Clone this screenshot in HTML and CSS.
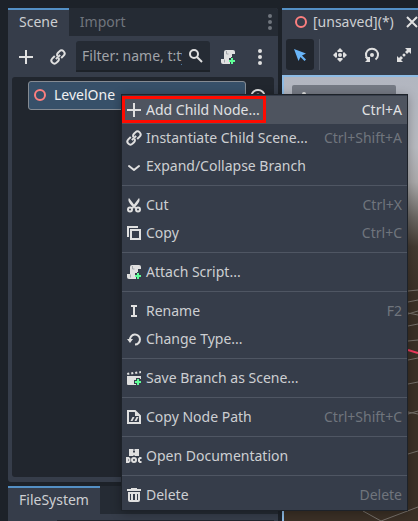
FILE: index.html
```
<!DOCTYPE html>
<html lang="en">
<head>
    <meta charset="UTF-8">
    <meta name="viewport" content="width=device-width, initial-scale=1.0">
    <title>Scene Editor</title>
    <link rel="stylesheet" href="styles.css">
</head>
<body>
    <!-- Shared icons -->
    <svg class="icon-defs" aria-hidden="true">
        <symbol id="add" viewBox="0 0 16 16"><path fill="currentColor" d="M7 1v6H1v2h6v6h2V9h6V7H9V1z"/></symbol>
        <symbol id="link" viewBox="0 0 16 16">
            <g fill="none" stroke="currentColor" stroke-width="2" transform="rotate(-45 8 8)">
                <path d="M6.500 5H3a3 3 0 0 0 0 6h2a3 3 0 0 0 2.800-2"/>
                <path d="M9.500 11H13a3 3 0 0 0 0-6h-2a3 3 0 0 0-2.800 2"/>
                <path d="M5 8h6"/>
            </g>
        </symbol>
        <symbol id="chevron" viewBox="0 0 16 16"><path fill="none" stroke="currentColor" stroke-width="2" stroke-linecap="round" stroke-linejoin="round" d="M3 8l5 4 5-4"/></symbol>
        <symbol id="cut" viewBox="0 0 16 16">
            <path fill="currentColor" d="M3 1C1.500 3 3 6 6.500 9.500L5.500 11l1.500 1 1-1.500L9 12l1.500-1-1-1.500C13 6 14.500 3 13 1L8 7.500z"/>
            <g fill="none" stroke="currentColor" stroke-width="2"><circle cx="4" cy="12.500" r="2"/><circle cx="12" cy="12.500" r="2"/></g>
        </symbol>
        <symbol id="copy" viewBox="0 0 16 16"><path fill="none" stroke="currentColor" stroke-width="2" d="M2 12V2h10M5 5h9v9H5z"/></symbol>
        <symbol id="script" viewBox="0 0 16 16">
            <path fill="currentColor" d="M6 1a2 2 0 0 0-2 2v7H1v3a2 2 0 0 0 2 2h7v-2H9v-4h2V8h1V5h3V3a2 2 0 0 0-2-2z"/>
            <path fill="none" stroke="#a4a7ac" d="M6.500 2v3h2M4.500 10.500v3"/>
            <path fill="#5fff97" d="M11 9h2v2h2v2h-2v2h-2v-2H9v-2h2z"/>
        </symbol>
        <symbol id="rename" viewBox="0 0 16 16"><path fill="currentColor" d="M5 2h6v2H9v8h2v2H5v-2h2V4H5z"/></symbol>
        <symbol id="reload" viewBox="0 0 16 16">
            <path fill="none" stroke="currentColor" stroke-width="2" d="M4 9a5 5 0 1 1 5 4.500"/>
            <path fill="currentColor" d="M1 8h6l-3 4z"/>
        </symbol>
        <symbol id="save-scene" viewBox="0 0 16 16">
            <path fill="currentColor" d="M1 6h14v3h-1V8h-4v2H8v4h2v1H2a1 1 0 0 1-1-1zM1 3l2-.5.500 2-2 .5zM5 2.500l2-.5.500 2-2 .5zM9 2l2-.5.500 2-2 .5zM13 1.500l2-.5v2l-1.500.5z"/>
            <path fill="#5fff97" d="M11 9h2v2h2v2h-2v2h-2v-2H9v-2h2z"/>
        </symbol>
        <symbol id="node-path" viewBox="0 0 16 16">
            <path fill="none" stroke="currentColor" stroke-width="2" d="M2 2h7l5 5v7H2z"/>
            <path fill="currentColor" d="M9 2v5h5zM6.500 8h2l-2 4h-2zM10.500 8h2l-2 4h-2z"/>
        </symbol>
        <symbol id="docs" viewBox="0 0 16 16">
            <path fill="currentColor" d="M3 1h4v4l1-1 1 1V1h4v7H9L8 7 7 8H3zM7.500 1h1v2h-1z"/>
            <g fill="none" stroke="currentColor" stroke-width="2"><path d="M1 10v4h1.500l1-1v-2l-1-1z"/><circle cx="8" cy="12" r="2"/><path d="M15.500 10H14l-1 1v2l1 1h1.500"/></g>
        </symbol>
        <symbol id="trash" viewBox="0 0 16 16"><path fill="currentColor" fill-rule="evenodd" d="M5 1h6v1h4v2H1V2h4zM2 5h12v8a2 2 0 0 1-2 2H4a2 2 0 0 1-2-2zm2 2v6h1V7zm3 0v6h2V7zm4 0v6h1V7z"/></symbol>
        <symbol id="search" viewBox="0 0 16 16"><g fill="none" stroke="currentColor" stroke-width="2"><circle cx="6" cy="6" r="4"/><path d="M9 9l5 5"/></g></symbol>
        <symbol id="dots" viewBox="0 0 16 16"><g fill="currentColor"><circle cx="8" cy="2" r="2"/><circle cx="8" cy="8" r="2"/><circle cx="8" cy="14" r="2"/></g></symbol>
        <symbol id="node3d" viewBox="0 0 16 16"><circle cx="8" cy="8" r="5" fill="none" stroke="#fc7f7f" stroke-width="2"/></symbol>
        <symbol id="eye" viewBox="0 0 16 16"><path fill="none" stroke="currentColor" stroke-width="2" d="M1.500 8a6.500 6 0 0 1 13 0a6.500 6 0 0 1-13 0z"/><circle cx="8" cy="8" r="2.500" fill="currentColor"/></symbol>
        <symbol id="close" viewBox="0 0 16 16"><path fill="none" stroke="currentColor" stroke-width="2" d="M3 3l10 10M13 3L3 13"/></symbol>
        <symbol id="select" viewBox="0 0 16 16"><path fill="#69b5f8" d="M2 2l4.500 12 2-4 4 4 1.500-1.500-4-4 4-2z"/></symbol>
        <symbol id="move" viewBox="0 0 16 16"><g fill="currentColor"><circle cx="8" cy="8" r="2"/><path d="M8 1l3 3-1 1H6L5 4zM8 15l3-3-1-1H6l-1 1zM1 8l3-3 1 1v4l-1 1zM15 8l-3-3-1 1v4l1 1z"/></g></symbol>
        <symbol id="rotate" viewBox="0 0 16 16">
            <path fill="none" stroke="currentColor" stroke-width="2" d="M4.500 12.500a6 6 0 1 1 7 0"/>
            <path fill="currentColor" d="M1 10h5v5H1l2-2z"/><circle cx="8" cy="8" r="2" fill="currentColor"/>
        </symbol>
        <symbol id="scale" viewBox="0 0 16 16">
            <path fill="currentColor" d="M9 1h6v6l-2-2-2 2-2-2 2-2zM7 15H1V9l2 2 2-2 2 2-2 2z"/><circle cx="8" cy="8" r="1.500" fill="currentColor"/>
        </symbol>
    </svg>

    <div class="editor">
        <div class="docks">
            <section class="dock scene-dock">
                <div class="tab-bar">
                    <button type="button" class="tab active">Scene</button>
                    <button type="button" class="tab">Import</button>
                    <button type="button" class="icon-btn tab-menu" aria-label="Dock options"><svg class="icon"><use href="#dots"/></svg></button>
                </div>
                <div class="scene-tools">
                    <button type="button" class="icon-btn" aria-label="Add node"><svg class="icon"><use href="#add"/></svg></button>
                    <button type="button" class="icon-btn" aria-label="Instantiate scene"><svg class="icon"><use href="#link"/></svg></button>
                    <label class="filter">
                        <input type="text" class="filter-input" placeholder="Filter: name, t:type" aria-label="Filter nodes">
                        <svg class="icon"><use href="#search"/></svg>
                    </label>
                    <button type="button" class="icon-btn" aria-label="Attach script"><svg class="icon"><use href="#script"/></svg></button>
                    <button type="button" class="icon-btn" aria-label="More options"><svg class="icon"><use href="#dots"/></svg></button>
                </div>
                <div class="tree">
                    <div class="tree-row">
                        <button type="button" class="tree-item"><svg class="icon"><use href="#node3d"/></svg>LevelOne</button>
                        <button type="button" class="icon-btn" aria-label="Toggle visibility"><svg class="icon"><use href="#eye"/></svg></button>
                    </div>
                </div>
            </section>
            <section class="dock files-dock">
                <div class="tab-bar">
                    <button type="button" class="tab active">FileSystem</button>
                </div>
                <div class="files-body"></div>
            </section>
        </div>

        <main class="workspace">
            <div class="scene-tab">
                <svg class="icon"><use href="#node3d"/></svg>
                <span class="scene-title">[unsaved](*)</span>
                <button type="button" class="icon-btn" aria-label="Close scene"><svg class="icon"><use href="#close"/></svg></button>
            </div>
            <div class="view-tools">
                <button type="button" class="tool-btn active" aria-label="Select"><svg class="icon"><use href="#select"/></svg></button>
                <span class="tool-divider"></span>
                <button type="button" class="tool-btn" aria-label="Move"><svg class="icon"><use href="#move"/></svg></button>
                <button type="button" class="tool-btn" aria-label="Rotate"><svg class="icon"><use href="#rotate"/></svg></button>
                <button type="button" class="tool-btn" aria-label="Scale"><svg class="icon"><use href="#scale"/></svg></button>
            </div>
            <div class="viewport">
                <svg class="grid-lines" viewBox="0 0 134 444" preserveAspectRatio="xMinYMin slice" aria-hidden="true">
                    <g fill="none" stroke="#77716b">
                        <path d="M124 214l10-1M124 225l10-2M124 236l10 2M124 237l10-3M124 249l10-2M124 264l10-1M124 283l10-2M124 307l10-2M124 335l10 2M124 337l10-3M124 377l10-3M79 434l18 10 37-14"/>
                    </g>
                    <path d="M124 273l10 3" stroke="#f33a5f" stroke-width="2"/>
                </svg>
                <button type="button" class="view-menu" aria-label="View options"><svg class="icon"><use href="#dots"/></svg></button>
            </div>
        </main>
    </div>

    <!-- Node context menu -->
    <div class="context-menu" role="menu">
        <button type="button" class="menu-item hovered" role="menuitem"><svg class="icon"><use href="#add"/></svg>Add Child Node...<kbd>Ctrl+A</kbd><span class="highlight"></span></button>
        <button type="button" class="menu-item" role="menuitem"><svg class="icon"><use href="#link"/></svg>Instantiate Child Scene...<kbd>Ctrl+Shift+A</kbd></button>
        <button type="button" class="menu-item" role="menuitem"><svg class="icon"><use href="#chevron"/></svg>Expand/Collapse Branch</button>
        <hr>
        <button type="button" class="menu-item" role="menuitem"><svg class="icon"><use href="#cut"/></svg>Cut<kbd>Ctrl+X</kbd></button>
        <button type="button" class="menu-item" role="menuitem"><svg class="icon"><use href="#copy"/></svg>Copy<kbd>Ctrl+C</kbd></button>
        <hr>
        <button type="button" class="menu-item" role="menuitem"><svg class="icon"><use href="#script"/></svg>Attach Script...</button>
        <hr>
        <button type="button" class="menu-item" role="menuitem"><svg class="icon"><use href="#rename"/></svg>Rename<kbd>F2</kbd></button>
        <button type="button" class="menu-item" role="menuitem"><svg class="icon"><use href="#reload"/></svg>Change Type...</button>
        <hr>
        <button type="button" class="menu-item" role="menuitem"><svg class="icon"><use href="#save-scene"/></svg>Save Branch as Scene...</button>
        <hr>
        <button type="button" class="menu-item" role="menuitem"><svg class="icon"><use href="#node-path"/></svg>Copy Node Path<kbd>Ctrl+Shift+C</kbd></button>
        <hr>
        <button type="button" class="menu-item" role="menuitem"><svg class="icon"><use href="#docs"/></svg>Open Documentation</button>
        <hr>
        <button type="button" class="menu-item" role="menuitem"><svg class="icon"><use href="#trash"/></svg>Delete<kbd>Delete</kbd></button>
    </div>
</body>
</html>
```
FILE: styles.css
```
* {
    box-sizing: border-box;
}
body {
    margin: 0;
    background-color: #1d2229;
    color: #cdcfd2;
    font-family: "Noto Sans", "Open Sans", sans-serif;
    font-size: 14px;
    line-height: 20px;
    overflow: hidden;
}
button, input, kbd {
    font: inherit;
    color: inherit;
}
button {
    padding: 0;
    border: none;
    background: none;
    cursor: pointer;
}
.icon-defs {
    display: none;
}
.icon {
    width: 16px;
    height: 16px;
    flex: none;
    display: block;
    color: #e0e0e0;
}
.editor {
    display: flex;
    gap: 4px;
    height: 100vh;
    padding: 8px 0 0 8px;
}
.docks {
    display: flex;
    flex-direction: column;
    gap: 4px;
    flex: 0 0 270px;
    min-width: 0;
}
.dock {
    display: flex;
    flex-direction: column;
    background-color: #363d4a;
}
.scene-dock {
    flex: 1;
    border-radius: 0 3px 3px 3px;
}
.files-dock {
    flex: 0 0 35px;
}
.tab-bar {
    display: flex;
    height: 28px;
    background-color: #252b34;
    border-radius: 0 3px 0 0;
}
.tab {
    padding: 0 11px;
    color: #70757d;
}
.tab.active {
    padding-bottom: 2px;
    background-color: #363d4a;
    border-top: 2px solid #5490c5;
    color: #cdcfd2;
}
.tab-menu {
    margin-left: auto;
}
.tab-menu .icon {
    color: #70757d;
}
.icon-btn {
    flex: none;
}
.scene-tools {
    display: flex;
    align-items: center;
    gap: 16px;
    height: 41px;
    padding: 0 10px;
}
.filter {
    display: flex;
    align-items: center;
    flex: 1;
    gap: 6px;
    min-width: 0;
    height: 31px;
    margin: 0 -6px;
    padding: 0 6px;
    background-color: #252b34;
    border-bottom: 2px solid #1d2229;
    border-radius: 3px 3px 0 0;
}
.filter-input {
    flex: 1;
    min-width: 0;
    padding: 0;
    border: none;
    outline: none;
    background: none;
}
.filter-input::placeholder {
    color: #a0a3a8;
    opacity: 1;
}
.tree {
    flex: 1;
    margin: 0 4px 5px;
    padding: 4px 8px 0 16px;
    background-color: #21262e;
    border-radius: 3px;
}
.tree-row {
    display: flex;
    align-items: center;
    gap: 4px;
}
.tree-item {
    display: flex;
    align-items: center;
    flex: 1;
    gap: 6px;
    height: 29px;
    padding: 0 3px 2px;
    border: 1px solid #858b93;
    border-radius: 3px;
    background-color: #375069;
    color: #f0f1f2;
}
.files-body {
    flex: 1;
    margin: 6px 4px 0 49px;
    background-color: #21262e;
}
.workspace {
    display: flex;
    flex-direction: column;
    flex: 1;
    min-width: 0;
    background-color: #363d4a;
    border-top: 2px solid #5490c5;
}
.scene-tab {
    display: flex;
    align-items: center;
    gap: 4px;
    height: 26px;
    padding: 0 0 2px 11px;
    overflow: hidden;
    white-space: nowrap;
}
.scene-title {
    margin-right: 6px;
}
.view-tools {
    display: flex;
    align-items: center;
    gap: 4px;
    height: 39px;
    padding: 0 0 2px 4px;
    overflow: hidden;
}
.tool-btn {
    display: flex;
    align-items: center;
    justify-content: center;
    flex: 0 0 28px;
    height: 31px;
    border-radius: 3px;
}
.tool-btn.active {
    background-color: #21262e;
}
.tool-divider {
    flex: 0 0 1px;
    height: 31px;
    margin: 0 2px 0 1px;
    background-color: #4f5663;
}
.viewport {
    position: relative;
    flex: 1;
    padding: 8px;
    border: solid #8dbbe5;
    border-width: 2px 0 0 2px;
    background: linear-gradient(#b2b6c0 0, #b8bac0 70px, #aaa9aa 105px, #6b6763 140px, #433a31 170px, #3b3026 220px);
}
.grid-lines {
    position: absolute;
    inset: 0;
    width: 100%;
    height: 100%;
}
.view-menu {
    position: relative;
    display: flex;
    align-items: center;
    min-width: 104px;
    height: 30px;
    padding: 0 4px;
    border-radius: 2px;
    background-color: #757a84;
}
.context-menu {
    position: absolute;
    top: 94px;
    left: 121px;
    width: 287px;
    padding: 1px 0;
    border: 1px solid #1d2229;
    background-color: #363d4a;
    box-shadow: 0 2px 10px rgba(0, 0, 0, 0.3);
}
.menu-item {
    position: relative;
    display: flex;
    align-items: center;
    gap: 4px;
    width: 100%;
    height: 28px;
    padding: 0 5px 0 4px;
}
.menu-item kbd {
    margin-left: auto;
    color: #70757d;
}
.menu-item.hovered {
    background-color: #4e545f;
    color: #e0e1e3;
}
.menu-item.hovered kbd {
    color: #e0e1e3;
}
.highlight {
    position: absolute;
    top: 0;
    left: 0;
    width: 144px;
    height: 27px;
    border: 3px solid #ff0b00;
}
.context-menu hr {
    height: 1px;
    margin: 5px 0;
    border: none;
    background-color: #4f5663;
}
```
